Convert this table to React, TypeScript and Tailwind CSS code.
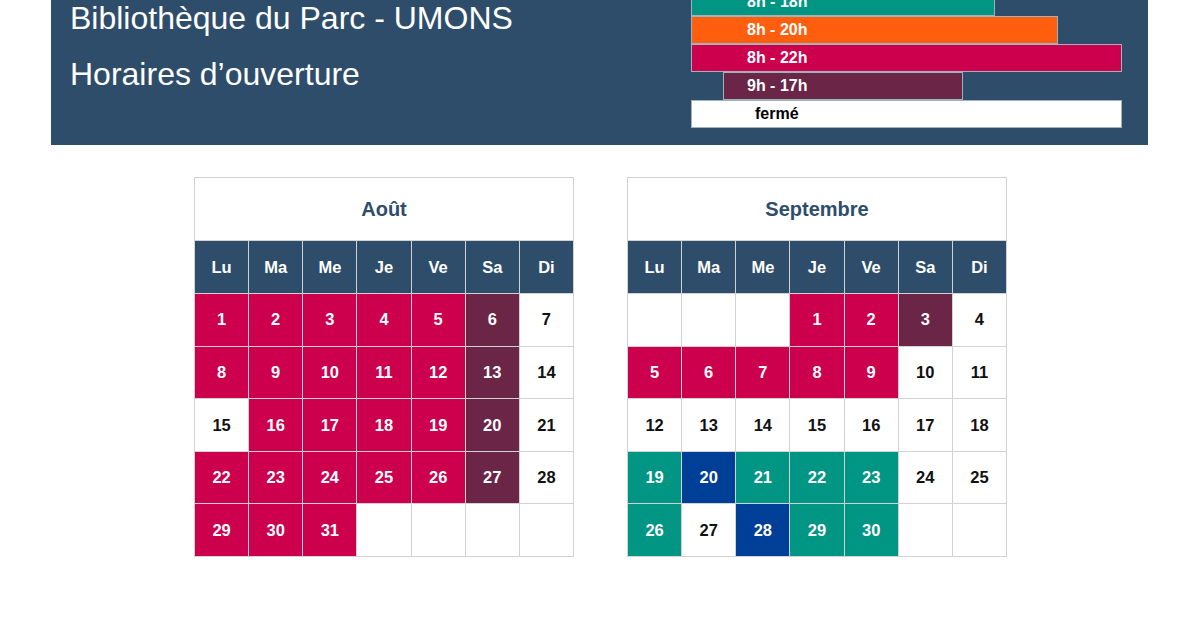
type Tone = "red" | "plum" | "teal" | "blue" | "off" | "none";

const toneClass: Record<Tone, string> = {
  red: "bg-[#cc004c] text-white",
  plum: "bg-[#6a2547] text-white",
  teal: "bg-[#009683] text-white",
  blue: "bg-[#003f98] text-white",
  off: "bg-white text-[#111]",
  none: "bg-white",
};

const jours = ["Lu", "Ma", "Me", "Je", "Ve", "Sa", "Di"];

type Day = { n?: number; t: Tone };

function buildMonth(offset: number, count: number, toneOf: (n: number, col: number) => Tone): Day[] {
  const cells: Day[] = [];
  for (let i = 0; i < offset; i++) cells.push({ t: "none" });
  for (let n = 1; n <= count; n++) {
    const col = (offset + n - 1) % 7;
    cells.push({ n, t: toneOf(n, col) });
  }
  while (cells.length < 35) cells.push({ t: "none" });
  return cells;
}

const aout = buildMonth(0, 31, (n, col) => {
  if (col === 6) return "off";
  if (col === 5) return "plum";
  if (n === 15) return "off";
  return "red";
});

const septTones: Record<number, Tone> = {
  1: "red", 2: "red", 3: "plum",
  5: "red", 6: "red", 7: "red", 8: "red", 9: "red",
  19: "teal", 20: "blue", 21: "teal", 22: "teal", 23: "teal",
  26: "teal", 28: "blue", 29: "teal", 30: "teal",
};

const septembre = buildMonth(3, 30, (n) => septTones[n] ?? "off");

function Calendar({ title, days }: { title: string; days: Day[] }) {
  return (
    <div className="w-[380px] bg-[#d2d2d2] p-px flex flex-col gap-px">
      <div className="h-[62px] bg-white flex items-center justify-center text-[20px] font-bold text-[#2e4d6b]">
        {title}
      </div>
      <div className="grid grid-cols-7 gap-px">
        {jours.map((j) => (
          <div key={j} className="h-[52px] bg-[#2e4d6b] text-white font-bold text-[16.5px] flex items-center justify-center">
            {j}
          </div>
        ))}
        {days.map((d, i) => (
          <div key={i} className={`h-[51.6px] font-bold text-[16.5px] flex items-center justify-center ${toneClass[d.t]}`}>
            {d.n}
          </div>
        ))}
      </div>
    </div>
  );
}

function Legend() {
  return (
    <div className="w-[431px] -mt-[12px] mr-[26px] flex flex-col text-[16px] font-bold">
      <div className="h-[28px] w-[304px] bg-[#009683] border border-[#9fb3bd] text-white flex items-center pl-[55px]">8h - 18h</div>
      <div className="h-[28px] w-[367px] bg-[#ff5e0e] border border-[#9fb3bd] text-white flex items-center pl-[55px]">8h - 20h</div>
      <div className="h-[28px] w-[431px] bg-[#cc004c] border border-[#9fb3bd] text-white flex items-center pl-[55px]">8h - 22h</div>
      <div className="h-[28px] w-[240px] ml-[32px] bg-[#6a2547] border border-[#9fb3bd] text-white flex items-center pl-[23px]">9h - 17h</div>
      <div className="h-[28px] w-[431px] bg-white border border-[#9fb3bd] text-black flex items-center pl-[63px]">fermé</div>
    </div>
  );
}

export default function App() {
  return (
    <div className="w-[1200px] h-[630px] bg-white overflow-hidden" style={{ fontFamily: '"Liberation Sans", Arial, sans-serif' }}>
      <div className="ml-[51px] w-[1097px] h-[145px] bg-[#2e4d6b] flex justify-between items-start overflow-hidden">
        <div className="pl-[19px] -mt-[10px] text-white text-[32px] leading-[56px]">
          <div>Bibliothèque du Parc - UMONS</div>
          <div>Horaires d’ouverture</div>
        </div>
        <Legend />
      </div>
      <div className="flex gap-[53px] mt-[32px] pl-[194px]">
        <Calendar title="Août" days={aout} />
        <Calendar title="Septembre" days={septembre} />
      </div>
    </div>
  );
}
